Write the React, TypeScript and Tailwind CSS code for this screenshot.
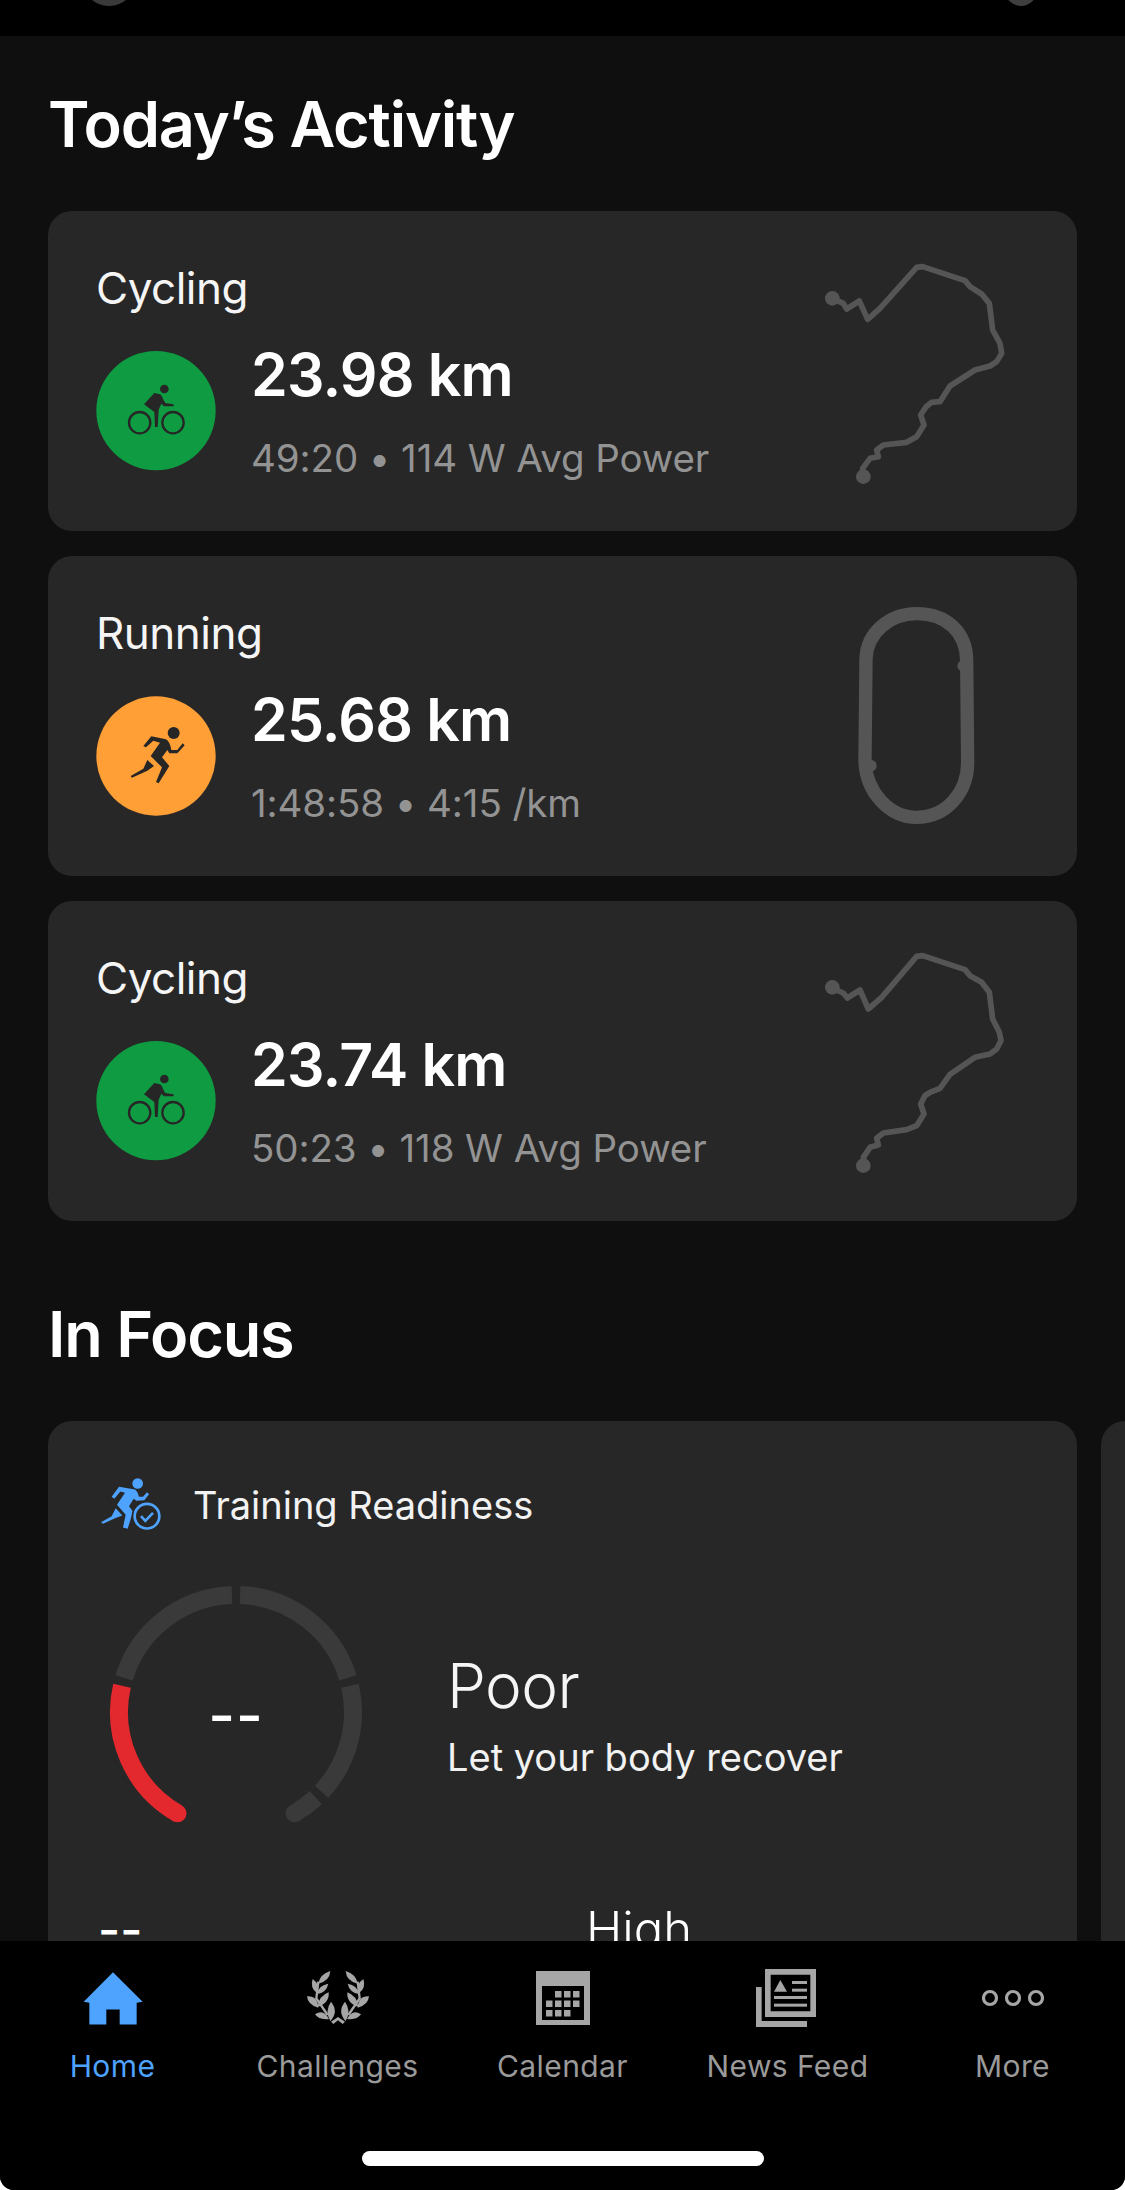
const cyclingRouteA =
  'M97 175 L130 190 L140 207 L178 183 L203 238 L240 205 L350 82 L368 80 L495 122 L510 140 L545 162 L568 190 L578 270 L600 310 L605 340 L590 365 L570 378 L525 390 L450 438 L420 485 L395 487 L378 500 L362 525 L372 555 L350 590 L320 607 L250 615 L230 630 L235 650 L210 655 L188 685 L188 710';
const cyclingRouteB =
  'M97 178 L130 192 L142 207 L180 183 L205 240 L245 205 L350 82 L368 80 L495 122 L510 140 L545 160 L568 190 L578 270 L598 310 L603 335 L590 360 L570 375 L525 385 L450 436 L420 478 L390 490 L375 500 L362 525 L372 555 L350 590 L320 602 L250 612 L230 628 L235 648 L210 655 L190 685 L195 710';

function polar(angle: number, r = 117) {
  const rad = ((angle - 90) * Math.PI) / 180;
  return [132 + r * Math.cos(rad), 132 + r * Math.sin(rad)];
}

function arc(from: number, to: number) {
  const [x1, y1] = polar(from);
  const [x2, y2] = polar(to);
  return `M${x1} ${y1} A117 117 0 0 1 ${x2} ${y2}`;
}

function BikeGlyph() {
  return (
    <svg viewBox="108 92 360 360" className="h-[120px] w-[120px]">
      <circle cx="288" cy="271" r="179" fill="#0f9b42" />
      <circle cx="313" cy="206" r="13" fill="#262626" />
      <circle cx="239" cy="307" r="32" fill="none" stroke="#262626" strokeWidth="7" />
      <circle cx="339" cy="307" r="32" fill="none" stroke="#262626" strokeWidth="7" />
      <path
        d="M283 218 L300 222 Q306 225 310 238 L316 248 L340 252 L342 258 L312 258 L304 250 L296 268 L293 320 L285 320 L283 275 L252 252 Z"
        fill="#262626"
      />
    </svg>
  );
}

function RunGlyph() {
  return (
    <svg viewBox="108 78 360 360" className="h-[120px] w-[120px]">
      <circle cx="288" cy="258" r="179" fill="#ff9f36" />
      <circle cx="341" cy="189" r="18" fill="#262626" />
      <path
        d="M250 228 L274 199 L318 208 Q330 215 334 240 L352 240 L368 220 L374 226 L352 250 L328 250 L322 240 L306 262 L328 288 L296 340 L288 336 L306 292 L272 258 L300 218 L280 212 L258 232 Z"
        fill="#262626"
      />
      <path d="M262 270 L282 288 L262 302 L216 323 L212 318 L250 296 Z" fill="#262626" />
    </svg>
  );
}

function ReadinessIcon() {
  return (
    <svg viewBox="60 50 195 170" className="h-[57px] w-[65px]" fill="#4da3ff">
      <circle cx="176" cy="72" r="16" />
      <path d="M98 112 L120 82 L168 90 Q176 96 180 112 L192 112 L204 98 L210 104 L196 122 L172 124 L164 118 L150 140 L162 156 L146 208 L132 204 L140 166 L114 136 L138 100 L124 96 L106 118 Z" />
      <path d="M110 146 L130 168 L108 176 L72 193 L66 188 L98 170 Z" />
      <circle cx="204" cy="170" r="46" fill="#272727" />
      <circle cx="204" cy="170" r="37" fill="none" stroke="#4da3ff" strokeWidth="8" />
      <path d="M186 170 L199 184 L222 160" fill="none" stroke="#4da3ff" strokeWidth="8" />
    </svg>
  );
}

function HomeIcon() {
  return (
    <svg viewBox="240 270 192 170" className="h-[57px] w-[64px]">
      <path
        d="M336 276 L425 365 L407 368 L407 433 L356 433 L356 388 L316 388 L316 433 L265 433 L265 368 L248 365 Z"
        fill="#4da3ff"
      />
    </svg>
  );
}

function LaurelHalf() {
  return (
    <>
      <path d="M112 66 Q116 38 148 28 Q146 58 112 66 Z" />
      <path d="M108 94 Q86 80 95 52 Q119 68 108 94 Z" />
      <path d="M106 98 Q114 70 142 66 Q136 94 106 98 Z" />
      <path d="M112 138 Q80 130 78 104 Q110 102 112 138 Z" />
      <path d="M110 136 Q114 102 143 92 Q146 124 110 136 Z" />
      <path d="M144 172 Q114 176 102 158 Q128 140 144 172 Z" />
      <path d="M148 178 Q130 148 150 120 Q174 150 148 178 Z" />
      <path d="M112 60 L106 110 L140 160" fill="none" stroke="#a6a6a6" strokeWidth="7" />
    </>
  );
}

function LaurelIcon() {
  return (
    <svg viewBox="78 28 186 162" className="h-[54px] w-[62px]" fill="#a6a6a6">
      <LaurelHalf />
      <g transform="translate(342 0) scale(-1 1)">
        <LaurelHalf />
      </g>
      <path d="M150 180 L171 166 L192 180 L185 187 L171 176 L157 187 Z" />
    </svg>
  );
}

function CalendarIcon() {
  const rows = [
    [1, 2, 3],
    [0, 1, 2, 3],
    [0, 1, 2],
  ];
  return (
    <svg viewBox="0 0 54 54" className="h-[54px] w-[54px]">
      <rect width="54" height="54" fill="#a6a6a6" />
      <rect x="6" y="15" width="42" height="34" fill="#000" />
      {rows.map((cols, row) =>
        cols.map((col) => (
          <rect key={`${row}-${col}`} x={10 + col * 9} y={20 + row * 9.5} width="6.5" height="6.5" fill="#a6a6a6" />
        )),
      )}
    </svg>
  );
}

function NewsIcon() {
  return (
    <svg viewBox="78 33 180 174" className="-ml-[3px] h-[58px] w-[60px]" fill="#a6a6a6">
      <path d="M78 87 H95 V189 H231 V207 H78 Z" />
      <path fillRule="evenodd" d="M105 33 H258 V177 H105 Z M122 50 V160 H241 V50 Z" />
      <path d="M151 66 L171 101 H132 Z" />
      <rect x="186" y="69" width="45" height="9" />
      <rect x="186" y="92" width="45" height="9" />
      <rect x="132" y="114" width="99" height="9" />
      <rect x="132" y="137" width="99" height="9" />
    </svg>
  );
}

function MoreIcon() {
  return (
    <svg viewBox="0 0 62 20" className="h-[20px] w-[62px]" fill="none" stroke="#a6a6a6" strokeWidth="3.2">
      <circle cx="8" cy="10" r="6.5" />
      <circle cx="31" cy="10" r="6.5" />
      <circle cx="54" cy="10" r="6.5" />
    </svg>
  );
}

function Route({ d }: { d: string }) {
  return (
    <svg viewBox="0 0 720 780" className="h-[260px] w-[240px]" fill="none">
      <path d={d} stroke="#555555" strokeWidth="17" strokeLinejoin="round" strokeLinecap="round" />
      <circle cx="97" cy="175" r="22" fill="#555555" />
      <circle cx="190" cy="710" r="22" fill="#555555" />
    </svg>
  );
}

function Track() {
  return (
    <svg viewBox="0 0 540 750" className="h-[250px] w-[180px]" fill="none">
      <path
        d="M135 510 L138 210 C140 130 210 74 290 74 C380 74 440 130 440 215 L443 520 C443 610 380 685 290 685 C210 685 135 610 135 510 Z"
        stroke="#555555"
        strokeWidth="40"
        strokeLinejoin="round"
      />
      <circle cx="152" cy="530" r="18" fill="#555555" />
      <circle cx="428" cy="230" r="16" fill="#555555" />
    </svg>
  );
}

function ActivityCard({
  title,
  distance,
  detail,
  glyph,
  map,
  mapClass,
}: {
  title: string;
  distance: string;
  detail: string;
  glyph: React.ReactNode;
  map: React.ReactNode;
  mapClass: string;
}) {
  return (
    <div className="flex h-[320px] justify-between rounded-[24px] bg-[#272727] pl-[48px]">
      <div className="pt-[49px]">
        <p className="text-[44px] leading-[56px] tracking-[-0.5px] text-[#f5f5f5]">{title}</p>
        <div className="mt-[35px] flex items-start gap-[35px]">
          {glyph}
          <div className="-mt-[12px]">
            <p className="text-[59px] leading-[72px] font-semibold tracking-[-0.8px] text-white">{distance}</p>
            <p className="mt-[23px] text-[38.5px] leading-[48px] tracking-[-0.1px] text-[#939393]">{detail}</p>
          </div>
        </div>
      </div>
      <div className={mapClass}>{map}</div>
    </div>
  );
}

function Tab({ label, icon, active }: { label: string; icon: React.ReactNode; active?: boolean }) {
  return (
    <div className="flex flex-col items-center">
      <div className="flex h-[60px] items-center">{icon}</div>
      <p
        className={`mt-[18px] text-[30px] leading-[40px] font-normal tracking-[0.4px] ${active ? 'text-[#4da3ff]' : 'text-[#9a9a9a]'}`}
      >
        {label}
      </p>
    </div>
  );
}

export default function App() {
  return (
    <div className="h-[2190px] w-[1125px] overflow-hidden bg-white font-['Inter',sans-serif]">
      <div className="flex h-full flex-col overflow-hidden rounded-b-[14px] bg-black">
        <div className="flex h-[36px] shrink-0 justify-between overflow-hidden pr-[88px] pl-[82px]">
          <div className="-mt-[48px] h-[54px] w-[54px] rounded-full bg-[#3a3a3a]" />
          <div className="-mt-[26px] h-[32px] w-[32px] rounded-full bg-[#3f3f3f]" />
        </div>

        <main className="min-h-0 flex-1 overflow-hidden bg-[#0f0f0f] pt-[52px]">
          <h2 className="pl-[48px] text-[63px] leading-[72px] font-semibold tracking-[-1.2px] text-white">
            Today’s Activity
          </h2>
          <div className="mt-[51px] ml-[48px] flex w-[1029px] flex-col gap-[25px]">
            <ActivityCard
              title="Cycling"
              distance="23.98 km"
              detail="49:20 • 114 W Avg Power"
              glyph={<BikeGlyph />}
              map={<Route d={cyclingRouteA} />}
              mapClass="pt-[29px] pr-[37px]"
            />
            <ActivityCard
              title="Running"
              distance="25.68 km"
              detail="1:48:58 • 4:15 /km"
              glyph={<RunGlyph />}
              map={<Track />}
              mapClass="pt-[33px] pr-[77px]"
            />
            <ActivityCard
              title="Cycling"
              distance="23.74 km"
              detail="50:23 • 118 W Avg Power"
              glyph={<BikeGlyph />}
              map={<Route d={cyclingRouteB} />}
              mapClass="pt-[28px] pr-[37px]"
            />
          </div>

          <h2 className="mt-[77px] pl-[48px] text-[63px] leading-[72px] font-semibold tracking-[-1.2px] text-white">
            In Focus
          </h2>

          <div className="mt-[51px] flex gap-[24px] pl-[48px]">
            <section className="h-[700px] w-[1029px] shrink-0 rounded-[24px] bg-[#272727]">
              <div className="flex items-center gap-[29px] pt-[55px] pl-[51px]">
                <ReadinessIcon />
                <p className="text-[38px] leading-[48px] text-[#f2f2f2]">Training Readiness</p>
              </div>
              <div className="mt-[47px] flex items-start pl-[56px]">
                <div className="relative h-[264px] w-[264px]">
                  <svg viewBox="0 0 264 264" className="h-[264px] w-[264px]" fill="none" strokeWidth="18">
                    <path d={arc(-150, -77)} stroke="#e3292d" />
                    <circle cx={polar(-150)[0]} cy={polar(-150)[1]} r="9" fill="#e3292d" />
                    <path d={arc(-73, -2)} stroke="#3a3a3a" />
                    <path d={arc(2, 73)} stroke="#3a3a3a" />
                    <path d={arc(77, 133)} stroke="#3a3a3a" />
                    <path d={arc(137, 150)} stroke="#3a3a3a" />
                    <circle cx={polar(150)[0]} cy={polar(150)[1]} r="9" fill="#3a3a3a" />
                  </svg>
                  <span className="absolute inset-0 flex items-center justify-center pt-[6px] text-[58px] font-medium tracking-[1px] text-white">
                    --
                  </span>
                </div>
                <div className="mt-[70px] ml-[79px]">
                  <p className="text-[62px] leading-[72px] font-light tracking-[-0.5px] text-[#f5f5f5]">Poor</p>
                  <p className="mt-[12px] text-[38px] leading-[46px] text-[#f2f2f2]">Let your body recover</p>
                </div>
              </div>
              <div className="mt-[56px] flex">
                <p className="w-[542px] pl-[50px] text-[48px] leading-[60px] font-medium text-white">--</p>
                <p className="-ml-[4px] text-[49px] leading-[60px] font-light text-white">High</p>
              </div>
            </section>
            <section className="h-[700px] w-[1029px] shrink-0 rounded-[24px] bg-[#272727]" />
          </div>
        </main>

        <nav className="h-[249px] shrink-0 bg-black pt-[27px]">
          <div className="grid grid-cols-5">
            <Tab label="Home" icon={<HomeIcon />} active />
            <Tab label="Challenges" icon={<LaurelIcon />} />
            <Tab label="Calendar" icon={<CalendarIcon />} />
            <Tab label="News Feed" icon={<NewsIcon />} />
            <Tab label="More" icon={<MoreIcon />} />
          </div>
          <div className="mx-auto mt-[65px] h-[15px] w-[402px] rounded-full bg-white" />
        </nav>
      </div>
    </div>
  );
}
